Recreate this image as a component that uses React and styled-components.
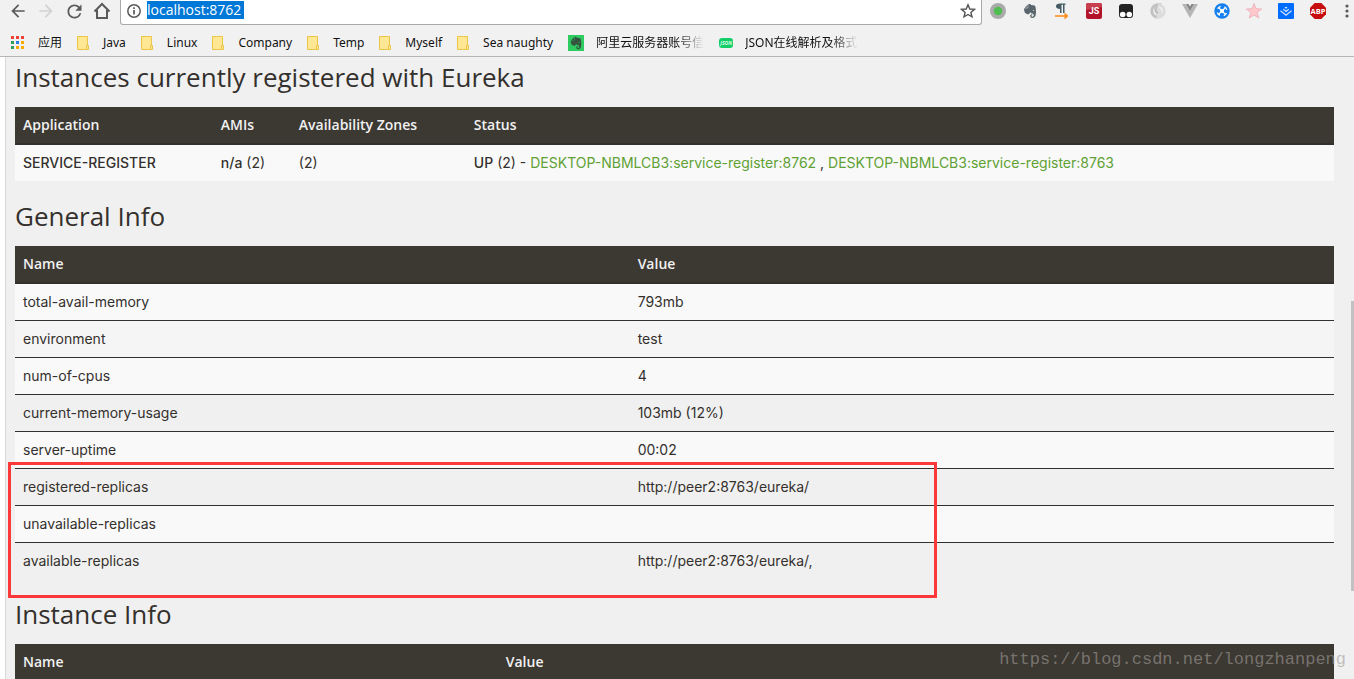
import React from 'react'
import styled, { createGlobalStyle } from 'styled-components'
import { FaEvernote } from 'react-icons/fa'
import { MdArrowBack, MdArrowForward, MdRefresh } from 'react-icons/md'

const GlobalStyle = createGlobalStyle`
  * {
    box-sizing: border-box;
  }
  body {
    margin: 0;
    overflow: hidden;
    background: #f0f0f0;
    color: #34302d;
    font-family: Inter, 'Noto Sans CJK SC', sans-serif;
    font-size: 14px;
    line-height: 20px;
  }
`

const Window = styled.div`
  position: relative;
  display: flex;
  flex-direction: column;
  height: 100vh;
  overflow: hidden;
`
const Chrome = styled.header`
  flex: none;
  background: #f1f1f1;
  border-bottom: 1px solid #b6b4b6;
`
const Toolbar = styled.div`
  display: flex;
  height: 25px;
  padding-left: 9px;
  padding-right: 1px;
`
const Nav = styled.nav`
  display: flex;
  gap: 10px;
  height: 22px;
  align-items: center;
`
const IconButton = styled.button`
  display: flex;
  align-items: center;
  justify-content: center;
  width: ${(p) => p.$size || 18}px;
  height: 18px;
  padding: 0;
  border: 0;
  background: none;
  color: ${(p) => (p.disabled ? '#d2d2d2' : '#5a5a5a')};
  svg {
    flex: none;
    display: block;
  }
`
const AddressBar = styled.div`
  flex: 1;
  display: flex;
  align-items: center;
  margin-left: 9px;
  padding: 0 4px 2px;
  background: #fff;
  border: 1px solid #a9a9a9;
  border-top: 0;
  border-radius: 0 0 3px 3px;
  color: #5a5a5a;
`
const Address = styled.input`
  width: 97px;
  height: 18px;
  margin: 0 auto 2px 4px;
  padding: 0;
  border: 0;
  outline: 0;
  background: #0078d7;
  color: #fff;
  font: 14px/18px 'Open Sans', sans-serif;
`
const Extensions = styled.div`
  display: flex;
  align-items: center;
  gap: 14px;
  height: 22px;
  padding-left: 7px;
`
const Bookmarks = styled.nav`
  display: flex;
  align-items: center;
  gap: 15px;
  height: 31px;
  padding-left: 10px;
  padding-top: 4px;
`
const Bookmark = styled.a`
  display: flex;
  align-items: center;
  gap: ${(p) => p.$gap || 14}px;
  color: #111;
  font: 12px/20px 'Noto Sans', 'Noto Sans CJK SC', sans-serif;
  text-decoration: none;
  white-space: nowrap;
`
const Faded = styled.span`
  mask-image: linear-gradient(to right, #000 76%, transparent);
`
const JsonBadge = styled.span`
  width: 14px;
  height: 10px;
  border-radius: 3px;
  background: #13ce66;
  color: #d9fbe8;
  font: italic 700 5px/10px 'Open Sans', sans-serif;
  text-align: center;
`

const Page = styled.main`
  flex: 1;
  margin-left: 5px;
  padding: 5px 20px 0 9px;
  border-left: 1px solid #d9d9d9;
`
const Gutter = styled.div`
  flex: 1;
  min-height: 0;
  display: flex;
  background: linear-gradient(to right, #fff 5px, #f0f0f0 5px);
`
const Title = styled.h1`
  margin: 0 0 15px;
  font: 400 26px/30px 'Open Sans', sans-serif;
`
const TableWrap = styled.div`
  position: relative;
  margin-bottom: 20px;
`
const Table = styled.table`
  width: 100%;
  table-layout: fixed;
  border-spacing: 0;
  th,
  td {
    height: 36px;
    padding: 7px 8px 8px;
    text-align: left;
    white-space: nowrap;
  }
  th {
    height: 38px;
    border-bottom: 2px solid #34302d;
    background: #3c3832;
    color: #f1f1f1;
    font-family: 'Open Sans', sans-serif;
    font-weight: 600;
  }
  tbody tr:nth-child(odd) {
    background: #f9f9f9;
  }
  tbody tr + tr td {
    height: 37px;
    border-top: 1px solid #34302d;
  }
  b {
    font-weight: 500;
  }
`
const Row = styled.tr`
  background: ${(p) => (p.$hovered ? '#f5f5f5' : 'transparent')};
`
const Link = styled.a`
  color: #5fa134;
  text-decoration: none;
`
const Highlight = styled.div`
  position: absolute;
  top: 216px;
  left: -7px;
  width: 929px;
  height: 136px;
  border: 3px solid #fd3838;
  pointer-events: none;
`
const ScrollThumb = styled.div`
  position: absolute;
  top: 301px;
  right: 0;
  width: 3px;
  height: 290px;
  background: #c1c1c1;
`
const Watermark = styled.div`
  position: absolute;
  right: 8px;
  bottom: 8px;
  color: rgba(160, 157, 152, 0.6);
  font: 17px/22px 'Liberation Mono', monospace;
`

const HomeIcon = () => (
  <svg width="18" height="18" viewBox="0 0 18 18" fill="none" stroke="currentColor" strokeWidth="2">
    <path d="M1.5 9.5 9 2l7.500 7.500M4 8v8h10V8" />
  </svg>
)
const InfoIcon = () => (
  <svg width="14" height="14" viewBox="0 0 14 14" fill="none" stroke="currentColor">
    <circle cx="7" cy="7" r="6.200" strokeWidth="1.500" />
    <path d="M7 6v4.500M7 3.300v1.600" strokeWidth="1.700" />
  </svg>
)
const StarIcon = () => (
  <svg width="16" height="16" viewBox="0 0 16 16" fill="none" stroke="#555" strokeWidth="1.400">
    <path d="m8 1.800 1.800 4.200 4.600.4-3.500 3 1.100 4.500-4-2.400-4 2.400 1.100-4.500-3.500-3 4.600-.4z" />
  </svg>
)
const AppsIcon = () => (
  <svg width="14" height="14" viewBox="0 0 14 14">
    {['#ea4335', '#ea4335', '#ea4335', '#2e9d57', '#2a7de1', '#fbab00', '#2e9d57', '#fbab00', '#fbab00'].map(
      (color, i) => (
        <rect key={i} x={1 + (i % 3) * 5} y={Math.floor(i / 3) * 5} width="3" height="3" fill={color} />
      )
    )}
  </svg>
)
const FolderIcon = () => (
  <svg width="12" height="14" viewBox="0 0 12 14" fill="#ffe793" stroke="#ebc547">
    <path d="M.5.5h10v13H.5z" />
    <path d="M9.500 9.500h2v4h-2z" />
  </svg>
)
const NoteIcon = () => (
  <svg width="16" height="16" viewBox="0 0 16 16">
    <path fill="#2dcb60" d="M0 0h16v16H0z" />
    <FaEvernote x="1" y="1" size="14" color="#355440" />
  </svg>
)

const extensions = [
  {
    name: 'Status',
    icon: (
      <>
        <circle cx="8" cy="8" r="8" fill="#aaa" />
        <circle cx="8" cy="8" r="4.200" fill="#4fbd52" />
      </>
    ),
  },
  { name: 'Evernote', icon: <FaEvernote x="0" y="0" size="16" color="#59666b" /> },
  {
    name: 'Paragraph',
    icon: (
      <>
        <path fill="#455a64" d="M11.500.5v1.300h-1V10H9V1.800H7.500V10H6V6C3.500 6 2 5 2 3.200S3.500.5 6 .5z" />
        <path fill="none" stroke="#ff8a0f" strokeWidth="1.600" d="M1 13h12M10.500 10.500 13.200 13l-2.700 2.500" />
      </>
    ),
  },
  {
    name: 'JS',
    icon: (
      <>
        <rect width="16" height="16" rx="2" fill="#b3142c" />
        <path fill="#c8404f" d="M2 0h12a2 2 0 0 1 2 2v2L0 7V2a2 2 0 0 1 2-2z" />
        <text x="8" y="11" fill="#fff" fontFamily="Roboto" fontWeight="700" fontSize="9" textAnchor="middle">JS</text>
      </>
    ),
  },
  {
    name: 'Tampermonkey',
    icon: (
      <>
        <rect x="1" y="1" width="14" height="14" rx="3" fill="#222" />
        <circle cx="4.700" cy="11.500" r="2.800" fill="#fff" />
        <circle cx="11.300" cy="11.500" r="2.800" fill="#fff" />
      </>
    ),
  },
  {
    name: 'JSON Viewer',
    icon: (
      <g fill="none" strokeWidth="3">
        <path stroke="#c2c2c2" d="M8 14.200C4 14 1.800 11 1.800 8S4 2 7.500 1.800C5 4 5 8 8 11" />
        <path stroke="#dcdcdc" d="M8 1.800c4 .2 6.200 3.200 6.200 6.200S12 14 8.500 14.200C11 12 11 8 8 5" />
      </g>
    ),
  },
  {
    name: 'Vue',
    icon: (
      <>
        <path fill="#b5b5b5" d="M0 1h4l4 7 4-7h4L8 15z" />
        <path fill="#858585" d="M4 1h2.500L8 3.600 9.500 1H12L8 8z" />
      </>
    ),
  },
  {
    name: 'Support',
    icon: (
      <>
        <circle cx="8" cy="8" r="7.700" fill="#147fee" />
        <circle cx="8" cy="8" r="4.900" fill="none" stroke="#fff" strokeWidth="1.300" strokeDasharray="3.700 4" strokeDashoffset="-2" />
        <circle cx="8" cy="8" r="2" fill="#fff" />
        <path stroke="#fff" strokeWidth="1.200" d="m4.500 4.500 7 7m0-7-7 7" />
      </>
    ),
  },
  {
    name: 'Favorites',
    icon: (
      <path
        fill="#ffc9cc"
        stroke="#eba9b5"
        strokeWidth=".8"
        d="m8 .5 2 5.200 5.600.3-4.400 3.500L12.700 15 8 11.900 3.300 15l1.500-5.500L.4 6 6 5.700z"
      />
    ),
  },
  {
    name: 'Juejin',
    icon: (
      <>
        <rect width="16" height="16" rx="1" fill="#006cff" />
        <path fill="none" stroke="#cce2ff" strokeWidth="1.300" d="m2.500 7.800 5.500 4.400 5.500-4.400M5.300 6.300 8 8.500l2.700-2.200M7 4.200l1 .8 1-.8" />
      </>
    ),
  },
  {
    name: 'Adblock Plus',
    icon: (
      <>
        <path fill="#c70d0d" d="M4.700 0h6.600L16 4.700v6.600L11.300 16H4.700L0 11.300V4.700z" />
        <text x="8" y="10.700" fill="#fff" fontFamily="Open Sans" fontWeight="700" fontSize="7.500" textAnchor="middle">ABP</text>
      </>
    ),
  },
]

const folders = ['Java', 'Linux', 'Company', 'Temp', 'Myself', 'Sea naughty']

const generalInfo = [
  ['total-avail-memory', '793mb'],
  ['environment', 'test'],
  ['num-of-cpus', '4'],
  ['current-memory-usage', '103mb (12%)'],
  ['server-uptime', '00:02'],
  ['registered-replicas', 'http://peer2:8763/eureka/'],
  ['unavailable-replicas', ''],
  ['available-replicas', 'http://peer2:8763/eureka/,'],
]

const BrowserChrome = () => (
  <Chrome>
    <Toolbar>
      <Nav>
        <IconButton aria-label="Back"><MdArrowBack size={20} /></IconButton>
        <IconButton aria-label="Forward" disabled><MdArrowForward size={20} /></IconButton>
        <IconButton aria-label="Reload"><MdRefresh size={21} /></IconButton>
        <IconButton aria-label="Home"><HomeIcon /></IconButton>
      </Nav>
      <AddressBar>
        <IconButton aria-label="Site information"><InfoIcon /></IconButton>
        <Address aria-label="Address" defaultValue="localhost:8762" />
        <IconButton aria-label="Bookmark this page"><StarIcon /></IconButton>
      </AddressBar>
      <Extensions>
        {extensions.map((item) => (
          <IconButton key={item.name} aria-label={item.name}>
            <svg width="16" height="16" viewBox="0 0 16 16">{item.icon}</svg>
          </IconButton>
        ))}
        <IconButton aria-label="Menu" $size={12}>
          <svg width="4" height="14" viewBox="0 0 4 14" fill="currentColor">
            <circle cx="2" cy="2" r="1.600" />
            <circle cx="2" cy="7" r="1.600" />
            <circle cx="2" cy="12" r="1.600" />
          </svg>
        </IconButton>
      </Extensions>
    </Toolbar>
    <Bookmarks>
      <Bookmark href="#apps"><AppsIcon />应用</Bookmark>
      {folders.map((name) => (
        <Bookmark key={name} href="#folder"><FolderIcon />{name}</Bookmark>
      ))}
      <Bookmark href="#aliyun" $gap={12}><NoteIcon /><Faded>阿里云服务器账号信</Faded></Bookmark>
      <Bookmark href="#json" $gap={12}><JsonBadge>JSON</JsonBadge><Faded>JSON在线解析及格式</Faded></Bookmark>
    </Bookmarks>
  </Chrome>
)

const InfoTable = ({ nameWidth, rows, children }) => (
  <TableWrap>
    <Table>
      <colgroup>
        <col width={nameWidth} />
        <col />
      </colgroup>
      <thead>
        <tr>
          <th>Name</th>
          <th>Value</th>
        </tr>
      </thead>
      <tbody>
        {rows.map(([name, value]) => (
          <Row key={name} $hovered={name === 'environment'}>
            <td>{name}</td>
            <td>{value}</td>
          </Row>
        ))}
      </tbody>
    </Table>
    {children}
  </TableWrap>
)

const App = () => (
  <Window>
    <GlobalStyle />
    <BrowserChrome />
    <Gutter>
      <Page>
        <Title>Instances currently registered with Eureka</Title>
        <TableWrap>
          <Table>
            <colgroup>
              <col width="15%" />
              <col width="78" />
              <col width="175" />
              <col />
            </colgroup>
            <thead>
              <tr>
                <th>Application</th>
                <th>AMIs</th>
                <th>Availability Zones</th>
                <th>Status</th>
              </tr>
            </thead>
            <tbody>
              <tr>
                <td><b>SERVICE-REGISTER</b></td>
                <td><b>n/a</b> (2)</td>
                <td>(2)</td>
                <td>
                  <b>UP</b> (2) - <Link href="#8762">DESKTOP-NBMLCB3:service-register:8762</Link> ,{' '}
                  <Link href="#8763">DESKTOP-NBMLCB3:service-register:8763</Link>
                </td>
              </tr>
            </tbody>
          </Table>
        </TableWrap>
        <Title>General Info</Title>
        <InfoTable nameWidth="46.6%" rows={generalInfo}>
          <Highlight />
        </InfoTable>
        <Title>Instance Info</Title>
        <InfoTable nameWidth="36.6%" rows={[]} />
      </Page>
    </Gutter>
    <ScrollThumb />
    <Watermark>https://blog.csdn.net/longzhanpeng</Watermark>
  </Window>
)

export default App
